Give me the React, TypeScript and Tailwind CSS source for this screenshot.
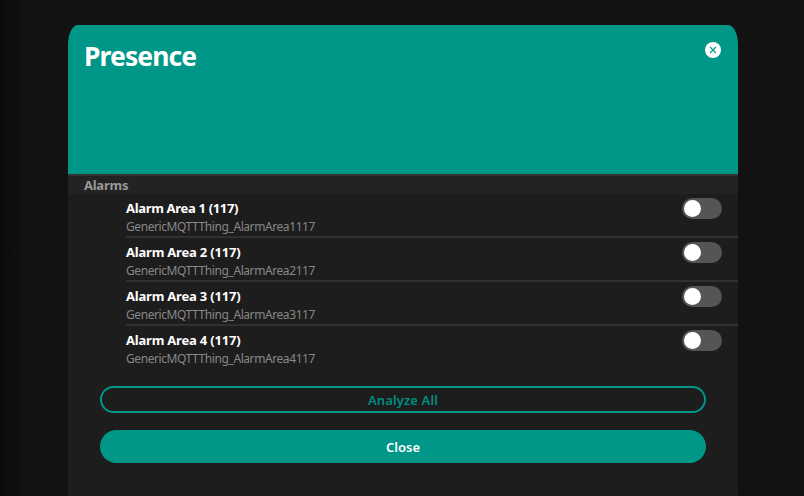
const areas = [
  { n: 1, tracking: "tracking-[-0.32px]" },
  { n: 2, tracking: "tracking-[-0.2px]" },
  { n: 3, tracking: "tracking-[-0.2px]" },
  { n: 4, tracking: "tracking-[-0.2px]" },
];

function Toggle() {
  return (
    <button
      role="switch"
      aria-checked="false"
      className="mt-[4px] mr-4 flex h-[21px] w-10 items-center rounded-full bg-[#555555] pl-[2px]"
    >
      <span className="block size-[16.5px] rounded-full bg-white" />
    </button>
  );
}

export default function App() {
  return (
    <div className="flex h-[496px] w-[804px] overflow-hidden bg-[linear-gradient(to_right,#0b0b0b_0px,#131313_28px,#131313_100%)] pt-[25px] pl-[68px] font-['Noto_Sans',sans-serif]">
      <main className="flex w-[670px] flex-col overflow-hidden rounded-t-[10px_20px] bg-[#1d1d1d] shadow-[0_0_12px_rgba(0,0,0,0.15)]">
        <header className="flex h-[149px] shrink-0 items-start justify-between bg-[#009688] px-4">
          <h1 className="mt-[13px] text-[26.5px] leading-9 font-bold tracking-[-0.9px] text-white">Presence</h1>
          <button aria-label="Close" className="mt-[17px] mr-px flex size-4 items-center justify-center rounded-full bg-white">
            <svg viewBox="0 0 16 16" className="size-4" fill="none" stroke="#009688" strokeWidth="1.1">
              <path d="M5 5L11 11M11 5L5 11" />
            </svg>
          </button>
        </header>
        <h2 className="flex h-5 shrink-0 items-center border-t-2 border-[#333333] bg-[#232323] pt-[2px] pl-4 text-[13px] font-bold tracking-[-0.25px] text-[#999999]">
          Alarms
        </h2>
        <ul className="pl-[58px]">
          {areas.map(({ n, tracking }) => (
            <li key={n} className="flex h-11 items-start justify-between border-b-2 border-[#303030] last:border-transparent">
              <div className="flex flex-col items-start pt-[5px] whitespace-nowrap">
                <span className={`text-[13px] leading-[18px] font-bold text-white ${tracking}`}>Alarm Area {n} (117)</span>
                <span className="pt-px text-[12px] leading-[18px] tracking-[-0.42px] text-[#888888]">
                  GenericMQTTThing_AlarmArea{n}117
                </span>
              </div>
              <Toggle />
            </li>
          ))}
        </ul>
        <div className="flex flex-col gap-[17px] px-8 pt-4 text-[13px]">
          <button className="h-[27px] rounded-full border-2 border-[#009688] pt-px leading-none font-semibold tracking-[0.1px] text-[#008d80]">
            Analyze All
          </button>
          <button className="h-[33px] rounded-full bg-[#009688] pt-px leading-none font-semibold text-white">Close</button>
        </div>
      </main>
    </div>
  );
}
